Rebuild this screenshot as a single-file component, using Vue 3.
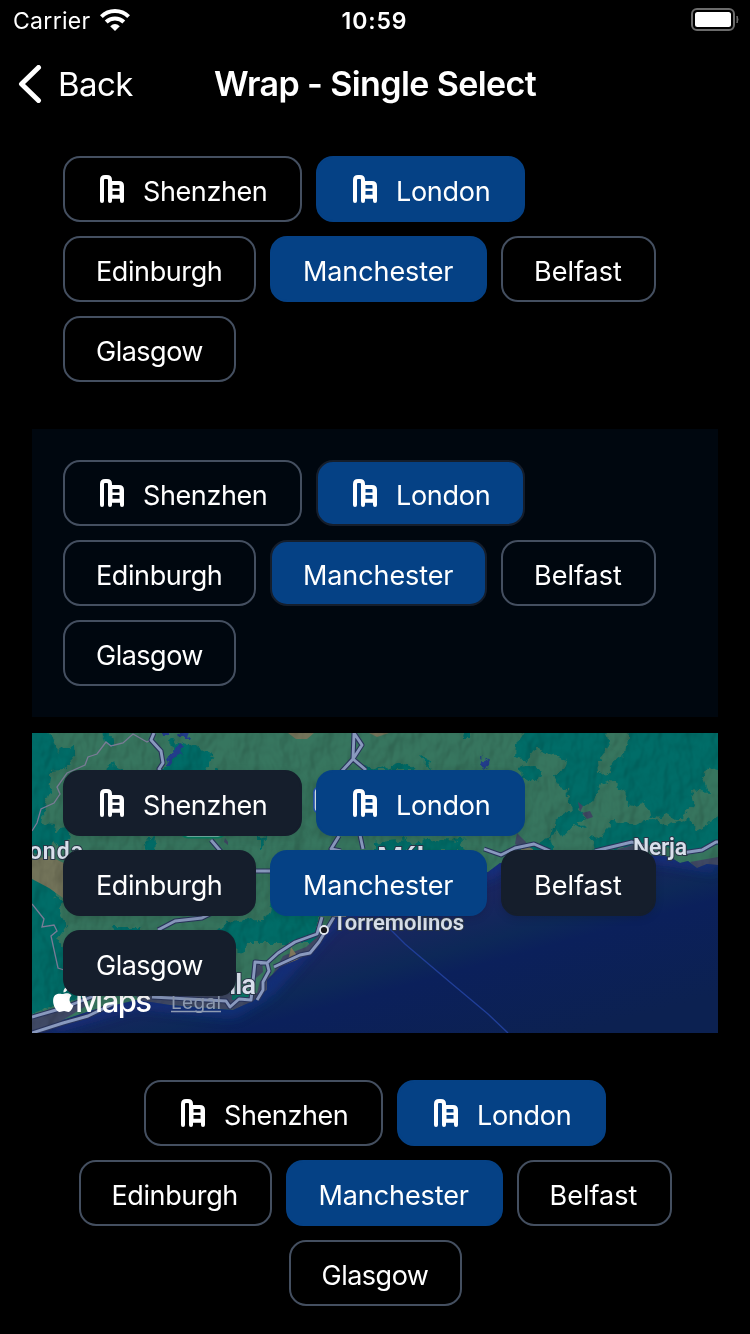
<script setup>
const rows = [
  [{ name: 'Shenzhen', icon: true }, { name: 'London', icon: true, selected: true }],
  [{ name: 'Edinburgh' }, { name: 'Manchester', selected: true }, { name: 'Belfast' }],
  [{ name: 'Glasgow' }],
]
const sections = ['plain', 'contrast', 'map', 'centered']
</script>

<template>
  <div class="screen">
    <header class="status">
      <div class="carrier">
        <span>Carrier</span>
        <svg width="30" height="22" viewBox="0 0 30 22">
          <g fill="none" stroke="#fff" stroke-width="4">
            <path d="M1.4 7.7a19.3 19.3 0 0 1 27.2 0" />
            <path d="M6.2 13a12.5 12.5 0 0 1 17.6 0" />
          </g>
          <path d="M10.2 17.2q4.8-4.2 9.6 0L15 22z" fill="#fff" />
        </svg>
      </div>
      <span class="time">10:59</span>
      <svg class="battery" width="48" height="23" viewBox="0 0 48 23">
        <rect x="1" y="1" width="42" height="21" rx="5" fill="none" stroke="#6b6b6b" stroke-width="2" />
        <rect x="4" y="4" width="36" height="15" rx="2.5" fill="#fff" />
        <path d="M46 8q2 3.500 0 7z" fill="#6b6b6b" stroke="#6b6b6b" />
      </svg>
    </header>

    <nav class="nav">
      <svg width="24" height="38" viewBox="0 0 24 38">
        <path d="M20.500 2.500 3.500 19 20.500 35.500" fill="none" stroke="#fff" stroke-width="5" stroke-linecap="round" stroke-linejoin="round" />
      </svg>
      <span class="back">Back</span>
      <h1>Wrap - Single Select</h1>
    </nav>

    <section v-for="s in sections" :key="s" class="section" :class="s">
      <svg v-if="s === 'map'" class="terrain" width="686" height="300" viewBox="0 0 686 300">
        <defs>
          <linearGradient id="sea" x1="0.200" y1="0.400" x2="0.800" y2="1">
            <stop offset="0" stop-color="#1b2d72" />
            <stop offset="0.300" stop-color="#19265f" />
            <stop offset="0.480" stop-color="#0d2858" />
            <stop offset="0.580" stop-color="#0b205b" />
            <stop offset="1" stop-color="#0c2151" />
          </linearGradient>
          <filter id="relief" x="0" y="0" width="100%" height="100%" color-interpolation-filters="sRGB">
            <feTurbulence type="fractalNoise" baseFrequency="0.050 0.032" numOctaves="3" seed="8" />
            <feDiffuseLighting surfaceScale="8" lighting-color="#fff"><feDistantLight azimuth="225" elevation="60" /></feDiffuseLighting>
          </filter>
          <filter id="jagged" x="-2%" y="-5%" width="104%" height="110%">
            <feTurbulence type="fractalNoise" baseFrequency="0.110" numOctaves="3" seed="4" result="n" />
            <feDisplacementMap in="SourceGraphic" in2="n" scale="11" xChannelSelector="R" yChannelSelector="G" />
          </filter>
          <filter id="soft"><feGaussianBlur stdDeviation="7" /></filter>
          <clipPath id="sea-clip"><path d="M0 304 31 287 61 277 105 267 138 272 201 277 221 268 235 257 235 247 248 234 265 227 281 219 291 204 301 184 350 165 400 145 456 139 468 130 540 126 625 122 638 124 648 130 656 128 665 135 675 131 686 132V300Z" /></clipPath>
        </defs>
        <rect width="686" height="300" fill="#37765f" />
        <g fill="#036d68" filter="url(#jagged)">
          <path d="M-8-8H12L21 10 25 18 40 14 42 30 32 37 20 38 17 60 13 68 10 90 23 91 22 98 35 96 40 104 28 114 22 111 8 121-8 118Z" />
          <path d="M68-8 83 8 81 14 72 8ZM75 32 82 29 83 34 90 36V47H70ZM138 8 160 13 183 23 174 34 180 38H153L143 42 128 36 142 25ZM160 37H184L194 46H165Z" />
          <path d="M-8 148 12 142 24 146 21 162 34 168 27 180 35 193 24 206 38 219 43 231 60 242 74 260 54 268 33 267 16 275-8 284Z" />
          <path d="M80 193H108L112 208 98 214 85 205ZM110 108 124 106 123 115 112 118ZM182 196 201 188 222 184 240 198 233 210 214 210 208 220 195 207 186 216Z" />
          <path d="M228 186 237 181 240 168H286V210H232L228 195ZM332 33 350 36 373 28 384 37H334ZM388 22 397 24 400 36ZM342 110 373 106 380 110 410 106 430 107 432 118H342ZM228 104 232 102 231 116H228Z" />
          <path d="M432-8H441L438 5H430ZM485 11 497-8H572L577 13 569 23 574 36 593 22 596-8H696V40L675 34 670 44 676 58 658 56 662 73 646 86 636 80 624 85 610 70 598 73 592 58 578 48 568 51 562 68 546 76 558 87 552 96 542 92 530 105 524 96 518 107 524 120H470L497 116 518 104 522 87 538 78 535 55 525 52 522 43 533 35 535 26 518 21 504 15 494 28 484 25Z" />
          <path d="M488 34 500 32 509 40 505 49 489 44ZM617 75 628 67 635 75 630 85 619 83ZM572 87 582 88 603 92 618 84 635 92 652 86 664 97 696 80V110L666 117 650 120 628 112 596 115 563 118 560 102Z" />
        </g>
        <g fill="#37765f" filter="url(#jagged)"><path d="M544 88 554 83 577 84 575 97 566 106 558 98ZM575-6H596L594 12 580 16ZM565 28 579 25 577 39 566 41Z" /></g>
        <g fill="#73745a"><path d="M256 0H282L275 6H264ZM337 0H357L345 4ZM0 127 17 123 34 131 31 151 42 160 31 165 17 155 0 146ZM490 111 501 116 500 122 488 122Z" /></g>
        <g fill="#404965"><path d="M0 282 24 278 31 275 52 266 54 273 31 287 0 304ZM98 258 225 260 228 248 240 242 251 223 274 214 294 196 304 184 300 198 284 219 257 232 243 250 229 266 204 277 112 270ZM222 230 230 227 231 239 224 245ZM546 69 551 73 548 79ZM550 80 558 78 561 84 555 86ZM485 100 494 109 492 116 483 111ZM580 118 607 110 614 119ZM658 129 686 124V133L666 136ZM193 105 196 109 196 112 192 109Z" /></g>
        <path d="M200 258H222L215 265 200 267Z" fill="#087063" />
        <path d="M251 232 257 224 259 214 264 221 270 221 265 227Z" fill="#81785d" />
        <g fill="#203d8c" filter="url(#jagged)"><path d="M128-6H138L137 5H130ZM146-6H158L155 5 148 5ZM141 17 149 10 151 16 142 25 137 32 132 31ZM450 25 459 29 455 36 448 32Z" /></g>
        <rect width="686" height="300" filter="url(#relief)" opacity="0.190" style="mix-blend-mode: multiply" />
        <g clip-path="url(#sea-clip)">
          <rect y="110" width="686" height="190" fill="url(#sea)" />
          <path d="M20 292 105 267 201 277 235 257 301 184 456 139 468 130 625 122 686 132" fill="none" stroke="#193798" stroke-width="10" opacity="0.800" filter="url(#soft)" />
          <path d="M346 184 373 211 419 250 456 281 476 300" fill="none" stroke="#203e97" stroke-width="1.400" />
        </g>
        <g fill="none" stroke="#7a7b96" stroke-width="1.300">
          <path d="M0 98 5 90 9 76 22 70 28 61 25 54 35 40 53 32 56 24 65 21 74 9 79 13 91 10 101 1 115 9 120 6M0 171 12 186 10 194 22 192 25 198 19 203 26 235 32 237" />
        </g>
        <g fill="none" stroke="#29345b" stroke-width="5" stroke-linejoin="round">
          <path d="M122 0 119 7 129 18 131 30 127 36 132 43M179 107 191 121M322 0 330 12 321 26 309 39M322 0 321 26 334 37M307 103 299 116 309 118M328 102 331 116" />
          <path d="M126 197 143 188 170 185 180 180M223 138H240M228 230H235L246 220 263 209 285 201 290 184M235 230 237 238 231 249 231 257 225 267M0 284 31 275 62 263M0 300 31 290 56 283 83 270M120 264 194 268 198 274 207 266 219 267 222 239 223 229 235 230M242 234 268 222 278 220 287 209 302 184" />
          <path d="M452 116 469 122 483 115 502 111 518 118M563 118 600 109 614 114M650 120 670 117 684 109H686" />
        </g>
        <g fill="none" stroke="#8999be" stroke-width="2.900" stroke-linejoin="round">
          <path d="M122 0 119 7 129 18 131 30 127 36 132 43M179 107 191 121M322 0 330 12 321 26 309 39M322 0 321 26 334 37M307 103 299 116 309 118M328 102 331 116" />
          <path d="M126 197 143 188 170 185 180 180M223 138H240M228 230H235L246 220 263 209 285 201 290 184M235 230 237 238 231 249 231 257 225 267M0 284 31 275 62 263M0 300 31 290 56 283 83 270M120 264 194 268 198 274 207 266 219 267 222 239 223 229 235 230M242 234 268 222 278 220 287 209 302 184" />
          <path d="M452 116 469 122 483 115 502 111 518 118M563 118 600 109 614 114M650 120 670 117 684 109H686" />
        </g>
        <rect x="148" y="84" width="46" height="20.500" rx="8" fill="#d9e5e9" stroke="#087f61" stroke-width="2" />
        <rect x="282" y="54" width="25" height="26" rx="5" fill="#d9e5e9" stroke="#2452ba" stroke-width="1.500" />
        <circle cx="292" cy="197" r="4" fill="#17181c" stroke="#e4e8ef" stroke-width="1.800" />
        <g class="places">
          <text x="-19" y="126" font-size="23" textLength="70">Ronda</text>
          <text x="345" y="135" font-size="30" textLength="92">Málaga</text>
          <text x="601" y="122" font-size="23" textLength="54">Nerja</text>
          <text x="301" y="197" font-size="22" textLength="131">Torremolinos</text>
          <text x="124" y="261" font-size="27" textLength="100">Marbella</text>
        </g>
        <path d="M31.500 259.500c-.3-3 1.800-5.600 4.600-6 .3 3-1.900 5.800-4.600 6zM39.500 262.500c-3-3.600-6.600-1.600-8.400-1.600-2 0-10-2.400-10 7.200 0 5 3.600 10.900 6.600 10.900 1.800 0 2.600-1 4.400-1s2.600 1 4.400 1c2 0 4.500-4.500 4.900-6.500-5-2.400-4.500-8-1.900-10z" fill="#fff" />
        <text class="maps" x="43" y="279" textLength="77">Maps</text>
        <text class="legal" x="139" y="276" textLength="50">Legal</text>
        <path d="M139 278.500h50" stroke="#8e9bb2" stroke-width="1.500" />
      </svg>
      <div class="chips">
        <div v-for="(row, i) in rows" :key="i" class="row">
          <div v-for="c in row" :key="c.name" class="chip" :class="[c.name.toLowerCase(), { selected: c.selected }]">
            <svg v-if="c.icon" width="24" height="28" viewBox="0 0 24 28" fill="none" stroke="#fff" stroke-width="4" stroke-linecap="round">
              <path d="M2 26V5q0-3 3-3h2q3 0 3 3v21M10 8h9q3 0 3 3v15M10 21.750h12" />
              <path d="M10 14.750h12" stroke-width="2.500" />
              <path d="M12.500 9v13M19.500 9v13" stroke-width="1" stroke-opacity="0.500" />
            </svg>
            <span>{{ c.name }}</span>
          </div>
        </div>
      </div>
    </section>
  </div>
</template>

<style>
html, body { margin: 0; background: #000; }
</style>

<style scoped>
.screen {
  width: 750px;
  height: 1334px;
  overflow: hidden;
  background: #000;
  color: #fff;
  font-family: Inter, "Liberation Sans", sans-serif;
}
.status {
  display: grid;
  grid-template-columns: 1fr auto 1fr;
  height: 40px;
  box-sizing: border-box;
  padding: 8px 11px 0 13px;
}
.carrier { display: flex; gap: 9px; font-size: 23px; line-height: 26px; letter-spacing: 0.3px; }
.carrier svg { margin-top: 1px; }
.time { margin-left: -3px; font-size: 23px; font-weight: 600; line-height: 26px; letter-spacing: 0.9px; }
.battery { justify-self: end; }
.nav {
  display: grid;
  grid-template-columns: 24px 159px auto;
  column-gap: 16px;
  align-items: center;
  height: 88px;
  padding-left: 18px;
}
.nav svg { display: block; }
.back { font-size: 33px; letter-spacing: -0.6px; }
h1 { margin: 0 0 0 -19px; font-size: 34px; font-weight: 600; line-height: 40px; letter-spacing: -0.6px; white-space: nowrap; }
.section { box-sizing: border-box; width: 686px; margin: 0 32px; padding: 28px 31px 0; }
.plain { height: 301px; }
.contrast { height: 288px; padding-top: 31px; background: #00070f; }
.map { position: relative; height: 300px; margin-top: 16px; padding-top: 37px; overflow: hidden; }
.centered { height: 301px; padding-top: 47px; }
.terrain { position: absolute; inset: 0; }
.chips { position: relative; display: flex; flex-direction: column; gap: 14px; }
.row { display: flex; gap: 14px; }
.centered .row { justify-content: center; }
.chip {
  display: flex;
  flex: none;
  align-items: center;
  box-sizing: border-box;
  height: 66px;
  padding: 6px 0 0 31px;
  border: 2px solid #444f60;
  border-radius: 17px;
  font-size: 27px;
  font-weight: 370;
  line-height: 34px;
  white-space: nowrap;
}
.chip svg { margin: -6px 19px 0 4px; }
.chip.selected { border-color: #054185; background: #054185; }
.contrast .chip.selected { border-color: #151e2c; }
.map .chip { border-color: #151e2c; background: #151e2c; box-shadow: 0 2px 8px #0002; }
.map .chip.selected { border-color: #054185; background: #054185; }
.shenzhen { width: 239px; letter-spacing: -0.4px; }
.london { width: 209px; letter-spacing: -0.3px; }
.edinburgh { width: 193px; letter-spacing: -0.4px; }
.manchester { width: 217px; letter-spacing: -0.1px; }
.belfast { width: 155px; }
.glasgow { width: 173px; letter-spacing: -0.5px; }
.places { fill: #d9e0ec; font-family: Roboto, Inter, sans-serif; font-weight: 600; stroke: #293647; stroke-width: 2px; paint-order: stroke; }
.maps { fill: #fff; font-size: 31px; font-weight: 500; }
.legal { fill: #8e9bb2; font-size: 19px; }
</style>
